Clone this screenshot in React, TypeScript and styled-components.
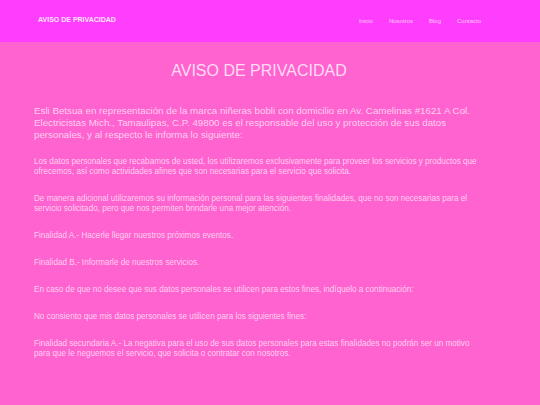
import React from "react";
import styled, { createGlobalStyle } from "styled-components";

const Global = createGlobalStyle`
  html, body { margin: 0; padding: 0; }
  body {
    background: #ff63d0;
    font-family: "Liberation Sans", Arial, sans-serif;
    -webkit-font-smoothing: antialiased;
  }
`;

const Header = styled.header`
  height: 42px;
  background: #ff3dfd;
  display: flex;
  align-items: center;
  justify-content: space-between;
  padding: 0 59px 0 38px;
  box-sizing: border-box;
`;

const Brand = styled.div`
  font-size: 7px;
  font-weight: bold;
  color: #ffe4ff;
  margin-top: -3px;
`;

const Nav = styled.nav`
  display: flex;
  gap: 16px;
`;

const NavLink = styled.a`
  font-size: 6px;
  color: rgba(255, 255, 255, 0.72);
  text-decoration: none;
`;

const Main = styled.main`
  padding: 19px 56px 40px 34px;
  color: rgba(255, 255, 255, 0.7);
`;

const Title = styled.h1`
  margin: 0;
  font-size: 16px;
  line-height: 20px;
  font-weight: normal;
  text-align: center;
  color: rgba(255, 255, 255, 0.78);
`;

const Intro = styled.p`
  margin: 24px 0 17px;
  font-size: 9.75px;
  line-height: 11.8px;
`;

const Para = styled.p`
  margin: 0 0 17px;
  font-size: 8.13px;
  line-height: 10px;
`;

const paragraphs = [
  "Los datos personales que recabamos de usted, los utilizaremos exclusivamente para proveer los servicios y productos que ofrecemos, así como actividades afines que son necesarias para el servicio que solicita.",
  "De manera adicional utilizaremos su información personal para las siguientes finalidades, que no son necesarias para el servicio solicitado, pero que nos permiten brindarle una mejor atención.",
  "Finalidad A.- Hacerle llegar nuestros próximos eventos.",
  "Finalidad B.- Informarle de nuestros servicios.",
  "En caso de que no desee que sus datos personales se utilicen para estos fines, indíquelo a continuación:",
  "No consiento que mis datos personales se utilicen para los siguientes fines:",
  "Finalidad secundaria A.- La negativa para el uso de sus datos personales para estas finalidades no podrán ser un motivo para que le neguemos el servicio, que solicita o contratar con nosotros.",
];

export default function App() {
  return (
    <>
      <Global />
      <Header>
        <Brand>AVISO DE PRIVACIDAD</Brand>
        <Nav>
          <NavLink href="#">Inicio</NavLink>
          <NavLink href="#">Nosotros</NavLink>
          <NavLink href="#">Blog</NavLink>
          <NavLink href="#">Contacto</NavLink>
        </Nav>
      </Header>
      <Main>
        <Title>AVISO DE PRIVACIDAD</Title>
        <Intro>
          Esli Betsua en representación de la marca niñeras bobli con domicilio en Av. Camelinas #1621 A Col.
          Electricistas Mich., Tamaulipas, C.P. 49800 es el responsable del uso y protección de sus datos
          personales, y al respecto le informa lo siguiente:
        </Intro>
        {paragraphs.map((p, i) => (
          <Para key={i}>{p}</Para>
        ))}
      </Main>
    </>
  );
}
